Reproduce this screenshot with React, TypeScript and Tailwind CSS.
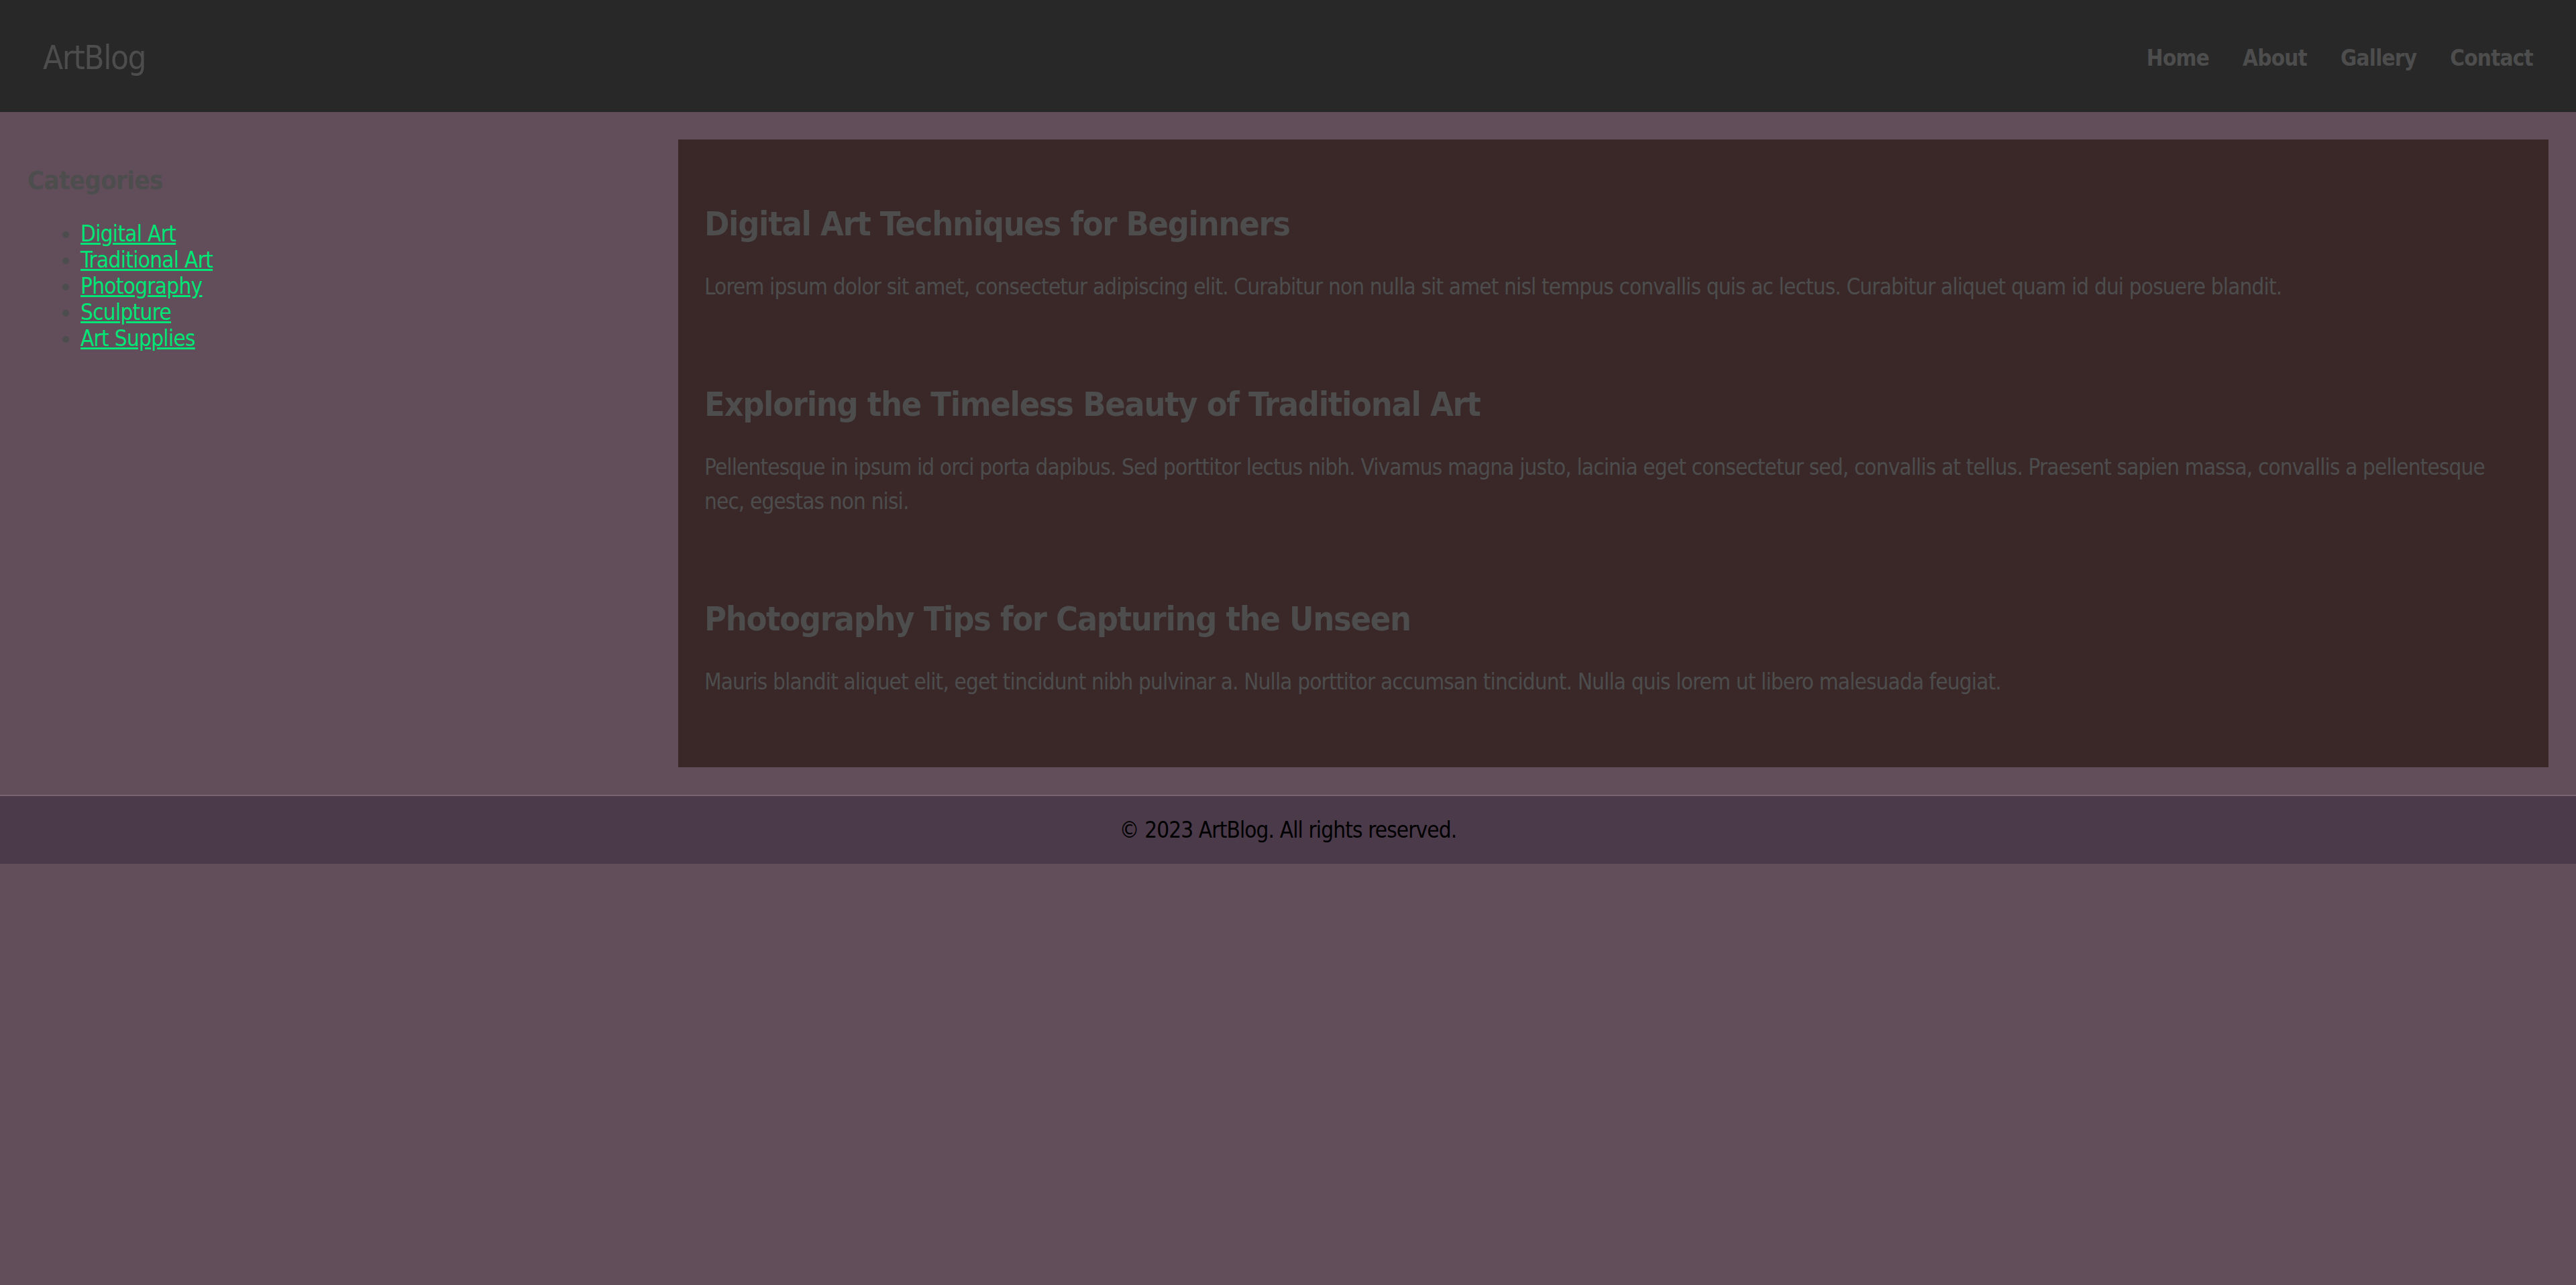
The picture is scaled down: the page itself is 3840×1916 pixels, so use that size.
import React from "react";

const categories = [
  "Digital Art",
  "Traditional Art",
  "Photography",
  "Sculpture",
  "Art Supplies",
];

const posts = [
  {
    title: "Digital Art Techniques for Beginners",
    body: "Lorem ipsum dolor sit amet, consectetur adipiscing elit. Curabitur non nulla sit amet nisl tempus convallis quis ac lectus. Curabitur aliquet quam id dui posuere blandit.",
  },
  {
    title: "Exploring the Timeless Beauty of Traditional Art",
    body: "Pellentesque in ipsum id orci porta dapibus. Sed porttitor lectus nibh. Vivamus magna justo, lacinia eget consectetur sed, convallis at tellus. Praesent sapien massa, convallis a pellentesque nec, egestas non nisi.",
  },
  {
    title: "Photography Tips for Capturing the Unseen",
    body: "Mauris blandit aliquet elit, eget tincidunt nibh pulvinar a. Nulla porttitor accumsan tincidunt. Nulla quis lorem ut libero malesuada feugiat.",
  },
];

const App = () => {
  return (
    <div className="min-h-[1916px] bg-[#614e5a] font-['DejaVu_Sans_Condensed','DejaVu_Sans',sans-serif] font-stretch-condensed text-[#4d4d4d]">
      <header className="h-[167px] flex items-center justify-between px-[64px] pt-[6px] bg-[#282828]">
        <div className="text-[49px] leading-none tracking-[-1.4px]">ArtBlog</div>
        <nav className="flex gap-[50px] text-[33px] font-bold tracking-[-0.8px]">
          <a>Home</a>
          <a>About</a>
          <a>Gallery</a>
          <a>Contact</a>
        </nav>
      </header>

      <div className="flex px-[41px] pt-[41px] pb-[41px]">
        <aside className="w-[970px] shrink-0">
          <h3 className="mt-[38px] text-[38px] leading-[47px] font-bold tracking-[-0.6px]">Categories</h3>
          <ul className="mt-[36px] pl-[79px] list-disc text-[33px] leading-[39px] tracking-[-0.7px]">
            {categories.map((c) => (
              <li key={c}>
                <a className="text-[#00e676] underline">{c}</a>
              </li>
            ))}
          </ul>
        </aside>

        <main className="flex-1 bg-[#3a2829] p-[39px]">
          {posts.map((p) => (
            <article key={p.title} className="flex flex-col mb-[63px]">
              <h2 className="mt-[58px] mb-[39px] text-[50px] leading-[58px] font-bold tracking-[-1.3px]">{p.title}</h2>
              <p className="text-[33px] leading-[51px] tracking-[-0.85px]">{p.body}</p>
            </article>
          ))}
        </main>
      </div>

      <footer className="h-[103px] flex items-center justify-center bg-[#4b3a4a] border-t-2 border-[#7a6470] text-[33px] tracking-[-0.86px] text-black">
        © 2023 ArtBlog. All rights reserved.
      </footer>
    </div>
  );
};

export default App;
